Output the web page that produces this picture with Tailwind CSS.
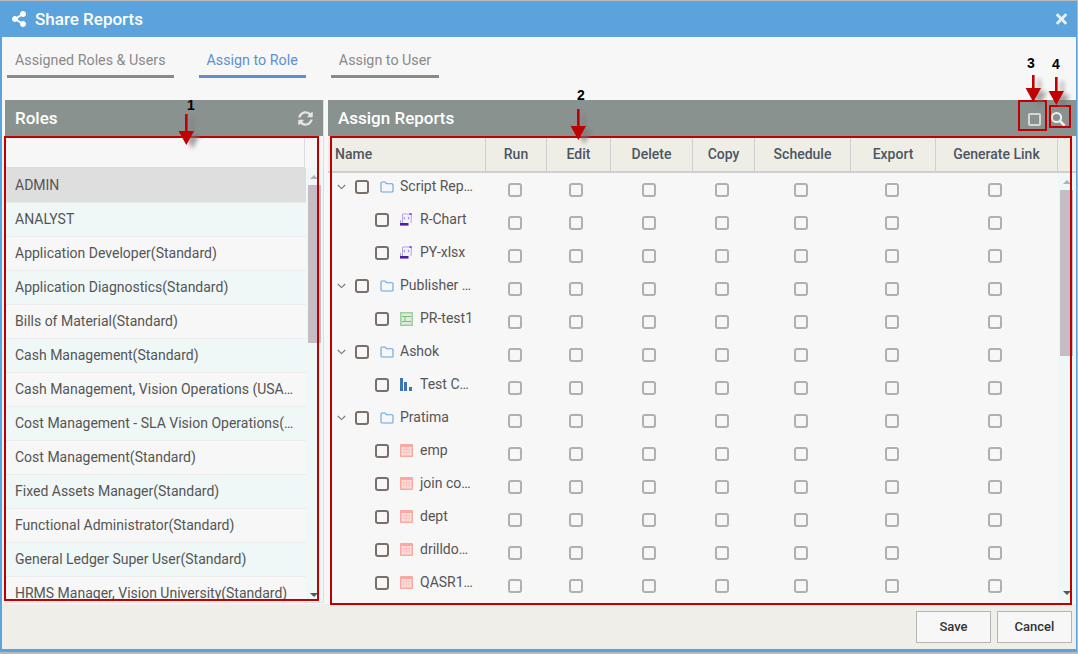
<!DOCTYPE html>
<html lang="en">
<head>
  <meta charset="UTF-8">
  <title>Share Reports</title>
  <script src="https://cdn.jsdelivr.net/npm/@tailwindcss/browser@4"></script>
</head>
<body class="bg-white font-['Roboto',sans-serif] overflow-hidden">
  <div class="relative w-[1078px] h-[654px] border-t border-r border-b-2 border-[#b9b9b9] overflow-hidden">
    <div class="h-[651px] border-l-2 border-r border-b-[3px] border-[#5ba3dd] flex flex-col bg-[#f7f7f7]">

      <!-- title bar -->
      <div class="h-[36px] shrink-0 bg-[#5ba3dd] flex items-center justify-between pl-[10px] pr-[9px] text-white">
        <div class="flex items-center gap-[9px]">
          <svg class="w-[14px] h-[16px]" viewBox="0 0 448 512" fill="currentColor"><path d="M352 320c-22.608 0-43.387 7.819-59.79 20.895l-102.486-64.054a96.551 96.551 0 0 0 0-41.683l102.486-64.054C308.613 184.181 329.392 192 352 192c53.019 0 96-42.981 96-96S405.019 0 352 0s-96 42.981-96 96c0 7.158.79 14.13 2.276 20.841L155.79 180.895C139.387 167.819 118.608 160 96 160c-53.019 0-96 42.981-96 96s42.981 96 96 96c22.608 0 43.387-7.819 59.79-20.895l102.486 64.054A96.301 96.301 0 0 0 256 416c0 53.019 42.981 96 96 96s96-42.981 96-96-42.981-96-96-96z"/></svg>
          <span class="text-[17px] font-medium leading-none">Share Reports</span>
        </div>
        <svg class="w-[11px] h-[16px] text-[#e6f0f9]" viewBox="0 0 352 512" fill="currentColor"><path d="M242.72 256l100.07-100.07c12.28-12.28 12.28-32.19 0-44.48l-22.24-22.24c-12.28-12.28-32.19-12.28-44.48 0L176 189.28 75.93 89.21c-12.28-12.28-32.19-12.28-44.48 0L9.21 111.45c-12.28 12.28-12.28 32.19 0 44.48L109.28 256 9.21 356.07c-12.28 12.28-12.28 32.19 0 44.48l22.24 22.24c12.28 12.28 32.2 12.28 44.48 0L176 322.72l100.07 100.07c12.28 12.28 32.2 12.28 44.48 0l22.24-22.24c12.28-12.28 12.28-32.19 0-44.48L242.72 256z"/></svg>
      </div>

      <!-- tabs -->
      <div class="h-[63px] shrink-0 flex items-start gap-[25px] pl-[5px] pt-[12px] text-[14.3px]">
        <div class="h-[29px] px-[8px] border-b-[3px] border-[#8a8a8a] text-[#8a8a8a] leading-[22px]">Assigned Roles &amp; Users</div>
        <div class="h-[29px] px-[8px] border-b-[3px] border-[#5f8fd0] text-[#5f8fd0] leading-[22px]">Assign to Role</div>
        <div class="h-[29px] px-[8px] border-b-[3px] border-[#8a8a8a] text-[#8a8a8a] leading-[22px]">Assign to User</div>
      </div>

      <!-- panels -->
      <div class="h-[504px] shrink-0 flex pl-[3px] gap-[4px]">
        <section class="w-[319px] h-[503px] flex flex-col border-r border-b border-[#dedede] overflow-hidden">
          <div class="h-[36px] shrink-0 bg-[#8a9290] flex items-center justify-between pl-[10px] pr-[10px] text-white">
            <span class="text-[17px] font-medium pt-[2px]">Roles</span>
            <svg class="w-[15px] h-[15px] text-[#e4e6e5]" viewBox="0 0 512 512" fill="currentColor"><path d="M370.72 133.28C339.458 104.008 298.888 87.962 255.848 88c-77.458.068-144.328 53.178-162.791 126.85-1.344 5.363-6.122 9.15-11.651 9.15H24.103c-7.498 0-13.194-6.807-11.807-14.176C33.933 94.924 134.813 8 256 8c66.448 0 126.791 26.136 171.315 68.685L463.03 40.97C478.149 25.851 504 36.559 504 57.941V192c0 13.255-10.745 24-24 24H345.941c-21.382 0-32.09-25.851-16.971-40.971l41.75-41.749zM32 296h134.059c21.382 0 32.09 25.851 16.971 40.971l-41.75 41.75c31.262 29.273 71.835 45.319 114.876 45.28 77.418-.07 144.315-53.144 162.787-126.849 1.344-5.363 6.122-9.15 11.651-9.15h57.304c7.498 0 13.194 6.807 11.807 14.176C478.067 417.076 377.187 504 256 504c-66.448 0-126.791-26.136-171.315-68.685L48.97 471.03C33.851 486.149 8 475.441 8 454.059V320c0-13.255 10.745-24 24-24z"/></svg>
          </div>
          <div class="flex-1 min-h-0 flex">
            <div class="w-[301px] shrink-0 flex flex-col overflow-hidden">
              <div class="h-[32px] shrink-0 w-[300px] border-r border-b border-[#dcdcdc]"></div>
              <div id="roles"></div>
            </div>
            <div class="relative flex-1">
              <div class="absolute inset-x-0 top-[31px] bottom-0 bg-[#eff7f7]"></div>
              <div class="absolute left-[2px] top-[49px] w-[13px] h-[158px] bg-[#c5bcc5]"></div>
              <div class="absolute left-[4px] top-[39px] w-0 h-0 border-x-[4px] border-x-transparent border-b-[4px] border-b-[#b0b0b0]"></div>
              <div class="absolute left-[4px] bottom-[5px] w-0 h-0 border-x-[4px] border-x-transparent border-t-[4px] border-t-[#555555]"></div>
            </div>
          </div>
        </section>

        <section class="flex-1 h-[503px] flex flex-col overflow-hidden">
          <div class="h-[36px] shrink-0 bg-[#8a9290] flex items-center justify-between pl-[10px] pr-[10px] text-white">
            <span class="text-[17px] font-medium pt-[2px]">Assign Reports</span>
            <div class="flex items-center gap-[9px] pt-[2px]">
              <div class="w-[13px] h-[13px] rounded-[2px] border-2 border-[#d5d8d7]"></div>
              <svg class="w-[16px] h-[16px]" viewBox="0 0 16 16" fill="none" stroke="#eef0ef"><circle cx="6.5" cy="6.5" r="4.6" stroke-width="2"/><path d="M10 10l4.6 4.6" stroke-width="2.6"/></svg>
            </div>
          </div>
          <div id="thead" class="h-[37px] shrink-0 flex bg-[#efeee6] border-b-[2px] border-[#cfcfcf] text-[14px] font-medium text-[#4c5661] leading-[37px]">
            <div class="w-[158px] border-r border-[#d0d0d0] pl-[7px]">Name</div>
            <div class="w-[61px] border-r border-[#d0d0d0] text-center">Run</div>
            <div class="w-[64px] border-r border-[#d0d0d0] text-center">Edit</div>
            <div class="w-[82px] border-r border-[#d0d0d0] text-center">Delete</div>
            <div class="w-[62px] border-r border-[#d0d0d0] text-center">Copy</div>
            <div class="w-[96px] border-r border-[#d0d0d0] text-center">Schedule</div>
            <div class="w-[85px] border-r border-[#d0d0d0] text-center">Export</div>
            <div class="w-[122px] border-r border-[#d0d0d0] text-center">Generate Link</div>
          </div>
          <div class="flex-1 min-h-0 flex">
            <div id="tree" class="w-[730px] shrink-0 overflow-hidden"></div>
            <div class="relative flex-1 bg-[#eff7f7]">
              <div class="absolute left-[2px] top-[17px] w-[13px] h-[166px] bg-[#c5bcc5]"></div>
              <div class="absolute left-[5px] top-[7px] w-0 h-0 border-x-[4px] border-x-transparent border-b-[4px] border-b-[#b0b0b0]"></div>
              <div class="absolute left-[5px] bottom-[8px] w-0 h-0 border-x-[4px] border-x-transparent border-t-[4px] border-t-[#555555]"></div>
            </div>
          </div>
        </section>
      </div>

      <!-- footer -->
      <div class="flex-1 bg-[#efeee8] flex justify-end gap-[6px] pr-[4px] pt-[7px] text-[13px] font-medium text-[#333333]">
        <button class="w-[75px] h-[32px] bg-[#f7f7f7] border border-[#b5b5b5]">Save</button>
        <button class="w-[75px] h-[32px] bg-[#f7f7f7] border border-[#b5b5b5]">Cancel</button>
      </div>
    </div>

    <!-- annotations drawn over the screenshot -->
    <div class="absolute left-[4px] top-[135px] w-[315px] h-[465px] border-2 border-[#c00000]"></div>
    <div class="absolute left-[330px] top-[135px] w-[742px] h-[469px] border-2 border-[#c00000]"></div>
    <div class="absolute left-[1018px] top-[99px] w-[29px] h-[31px] border-2 border-[#c00000]"></div>
    <div class="absolute left-[1049px] top-[104px] w-[22px] h-[23px] border-2 border-[#c00000]"></div>
    <span class="absolute left-[187px] top-[96px] text-[14px] font-bold leading-[16px] text-black font-['Liberation_Sans']">1</span>
    <span class="absolute left-[577px] top-[86px] text-[14px] font-bold leading-[16px] text-black font-['Liberation_Sans']">2</span>
    <span class="absolute left-[1027px] top-[54px] text-[14px] font-bold leading-[16px] text-black font-['Liberation_Sans']">3</span>
    <span class="absolute left-[1052px] top-[55px] text-[14px] font-bold leading-[16px] text-black font-['Liberation_Sans']">4</span>
    <div id="arrows"></div>
  </div>

  <script>
    const roles = [
      "ADMIN", "ANALYST", "Application Developer(Standard)", "Application Diagnostics(Standard)",
      "Bills of Material(Standard)", "Cash Management(Standard)", "Cash Management, Vision Operations (USA…",
      "Cost Management - SLA Vision Operations(…", "Cost Management(Standard)", "Fixed Assets Manager(Standard)",
      "Functional Administrator(Standard)", "General Ledger Super User(Standard)", "HRMS Manager, Vision University(Standard)"
    ];
    document.getElementById("roles").innerHTML = roles.map((r, i) => {
      const bg = i === 0 ? "bg-[#dedede] h-[35px]" : i % 2 ? "bg-[#eff7f7] h-[34px]" : "bg-[#f7f7f7] h-[34px]";
      return `<div class="${bg} pl-[10px] flex items-center text-[14px] text-[#555555] whitespace-nowrap border-b border-[#ececec]">${r}</div>`;
    }).join("");

    const icons = {
      folder: `<svg class="w-[14px] h-[12px]" viewBox="0 0 14 12" fill="none" stroke="#62a5e3" stroke-width="1.1"><path d="M1 10V2a1 1 0 0 1 1-1h3l1.5 1.7H12a1 1 0 0 1 1 1V10a1 1 0 0 1-1 1H2a1 1 0 0 1-1-1z"/></svg>`,
      script: `<svg class="w-[12px] h-[13px]" viewBox="0 0 12 13" fill="none"><path d="M2.5 10V1h9l-.5 9" fill="#f6f3fd" stroke="#b3a3ea"/><path d="M9.5 0h2v2h-2z" fill="#7b55d6"/><path d="M5.2 4L3.8 5.2l1.4 1.2M7.8 4l1.4 1.2-1.4 1.2" stroke="#7b6ac8" stroke-width=".8"/><path d="M0 10h8.5v2.6H0z" fill="#4b1fa8"/><path d="M.5 7v3" stroke="#b3a3ea"/></svg>`,
      sheet: `<svg class="w-[13px] h-[14px]" viewBox="0 0 13 14"><rect width="13" height="14" fill="#9fcea5"/><rect x="1.5" y="1.5" width="10" height="11" fill="#dcedd8"/><path d="M2 4.5h9M2 9.5h9M5 4.5v5" stroke="#7fb986"/></svg>`,
      chart: `<svg class="w-[12px] h-[13px]" viewBox="0 0 12 13" fill="#3d74b8"><rect width="3" height="13" x="0"/><rect width="3" height="9" x="4" y="4"/><rect width="3" height="4" x="9" y="9"/></svg>`,
      table: `<svg class="w-[13px] h-[13px]" viewBox="0 0 13 13"><rect width="13" height="13" rx="1" fill="#f9a9a3"/><rect x="1.5" y="3" width="10" height="8.5" fill="#fde4e1"/><path d="M1.5 5.5h10M1.5 8h10M4 3v8.5M6.5 3v8.5M9 3v8.5" stroke="#f9b8b2" stroke-width=".7"/></svg>`
    };
    const tree = [
      { name: "Script Rep…", icon: "folder", root: true },
      { name: "R-Chart", icon: "script" },
      { name: "PY-xlsx", icon: "script" },
      { name: "Publisher …", icon: "folder", root: true },
      { name: "PR-test1", icon: "sheet" },
      { name: "Ashok", icon: "folder", root: true },
      { name: "Test C…", icon: "chart" },
      { name: "Pratima", icon: "folder", root: true },
      { name: "emp", icon: "table" },
      { name: "join co…", icon: "table" },
      { name: "dept", icon: "table" },
      { name: "drilldo…", icon: "table" },
      { name: "QASR1…", icon: "table" }
    ];
    const permWidths = ["w-[60px]", "w-[62px]", "w-[84px]", "w-[62px]", "w-[96px]", "w-[86px]", "w-[120px]"];
    const permBox = `<div class="w-[14px] h-[14px] rounded-[3px] border-2 border-[#b0b0b0]"></div>`;
    const nameBox = `<div class="w-[14px] h-[14px] shrink-0 rounded-[3px] border-2 border-[#7a6f6a]"></div>`;
    const chevron = `<svg class="w-[9px] h-[6px] shrink-0" viewBox="0 0 9 6" fill="none" stroke="#777777" stroke-width="1.1"><path d="M.8 1l3.7 3.6L8.2 1"/></svg>`;
    document.getElementById("tree").innerHTML = tree.map(row => {
      const name = row.root
        ? `<div class="w-[7px] mr-[10px] ml-[10px] flex justify-center">${chevron}</div>${nameBox}<div class="w-[31px] pl-[11px] shrink-0 flex">${icons[row.icon]}</div><span>${row.name}</span>`
        : `<div class="w-[47px] shrink-0"></div>${nameBox}<div class="w-[31px] pl-[11px] shrink-0 flex">${icons[row.icon]}</div><span>${row.name}</span>`;
      const cells = permWidths.map(w => `<div class="${w} flex justify-center">${permBox}</div>`).join("");
      return `<div class="h-[33px] flex items-center">
        <div class="w-[157px] shrink-0 h-full flex items-center pb-[6px] text-[14px] text-[#555555] whitespace-nowrap">${name}</div>${cells}
      </div>`;
    }).join("");

    // red arrows with the soft shadow the annotation tool left behind
    const arrows = [[186, 113, 144], [578, 108, 139], [1033, 74, 101], [1056, 76, 104]];
    document.getElementById("arrows").innerHTML = arrows.map(([x, y0, y1]) => {
      const h = y1 - y0;
      const shape = `M7 0h2.6v${h - 14}H16L8.3 ${h}L.6 ${h - 14}H7z`;
      return `<svg class="absolute overflow-visible" style="left:${x - 8}px;top:${y0}px" width="17" height="${h}" viewBox="0 0 17 ${h}">
        <path d="${shape}" fill="#777777" opacity=".65" transform="translate(6 4)" class="blur-[2px]"/>
        <path d="${shape}" fill="#c00000"/>
      </svg>`;
    }).join("");
  </script>
</body>
</html>
